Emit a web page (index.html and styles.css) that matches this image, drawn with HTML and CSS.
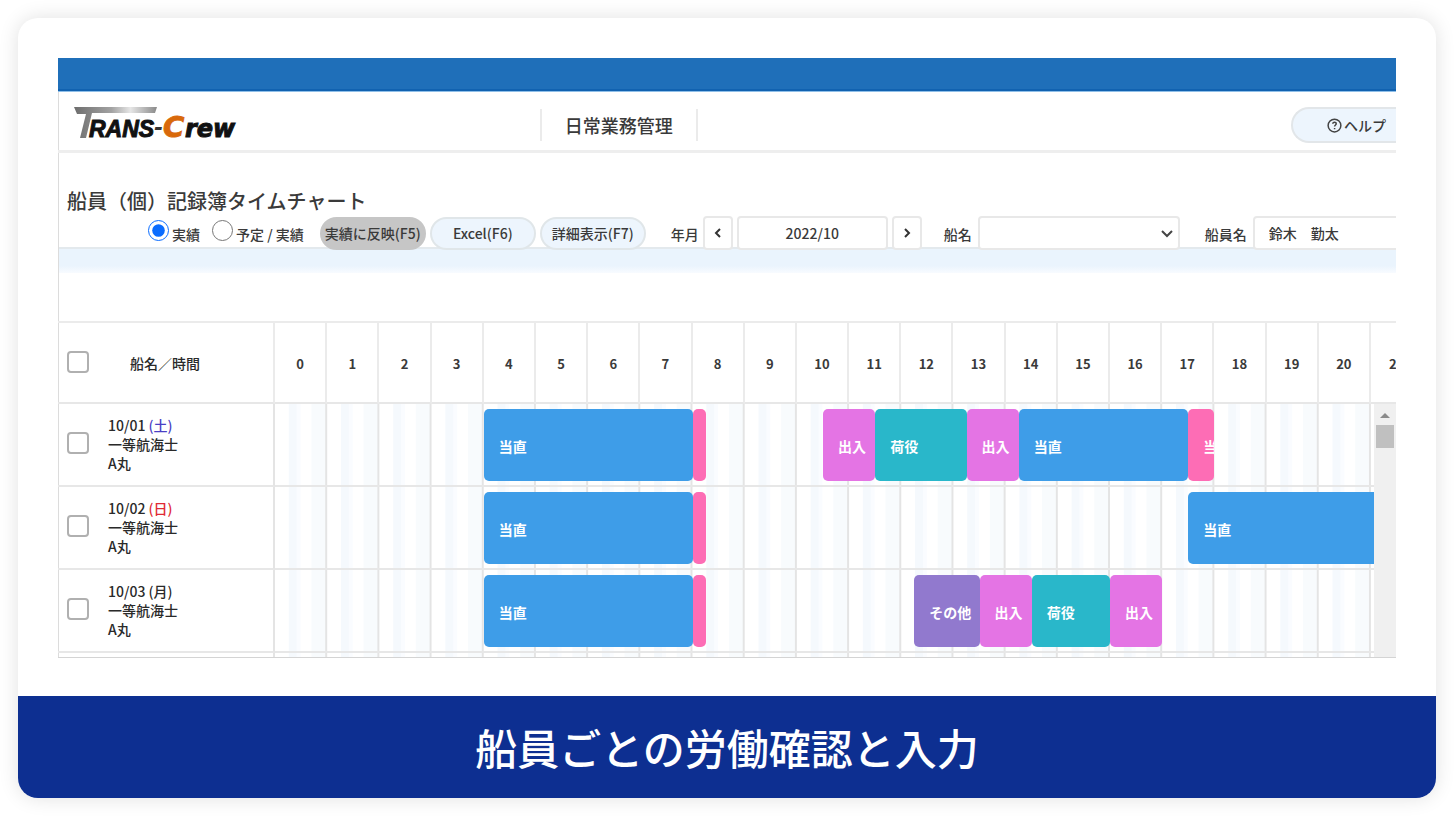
FILE: index.html
```html
<!DOCTYPE html>
<html lang="ja">
<head>
<meta charset="utf-8">
<meta name="viewport" content="width=device-width, initial-scale=1">
<title>船員ごとの労働確認と入力</title>
<link rel="stylesheet" href="styles.css">
</head>
<body>
<figure class="card">
  <div class="screen">
    <div class="topbar"></div>
    <header class="header">
      <svg class="logo" viewBox="0 0 170 36" width="170" height="36" role="img" aria-label="TRANS-Crew">
        <defs>
          <linearGradient id="silver" x1="0" x2="1" y1="0" y2="0">
            <stop offset="0" stop-color="#6d6d6d"/>
            <stop offset="0.45" stop-color="#a2a2a2"/>
            <stop offset="0.68" stop-color="#e6e6e6"/>
            <stop offset="1" stop-color="#8a8a8a"/>
          </linearGradient>
        </defs>
        <path d="M0 0H83L81 6H18L12 31H6L12 7H3Z" fill="url(#silver)"/>
        <text class="logo-rans" x="15" y="30">RANS</text>
        <text class="logo-dash" x="80" y="28">-</text>
        <text class="logo-c" x="89" y="30">C</text>
        <text class="logo-rew" x="111" y="30">rew</text>
      </svg>
      <h1 class="page-name">日常業務管理</h1>
      <button class="help" type="button">
        <svg viewBox="0 0 16 16" width="15" height="15" aria-hidden="true"><circle cx="8" cy="8" r="6.8" fill="none" stroke="#444" stroke-width="1.6"/><path d="M6.2 6.2C6.2 3.8 10 4 9.8 6.3C9.7 7.4 8.2 7.5 8.1 9.1M8.1 10.6V12" fill="none" stroke="#444" stroke-width="1.6"/></svg>ヘルプ
      </button>
    </header>

    <h2 class="title">船員（個）記録簿タイムチャート</h2>
    <form class="toolbar">
      <label class="radio"><input type="radio" name="mode" checked><span>実績</span></label>
      <label class="radio"><input type="radio" name="mode"><span>予定 / 実績</span></label>
      <div class="actions">
        <button class="pill pill-active" type="button">実績に反映(F5)</button>
        <button class="pill" type="button">Excel(F6)</button>
        <button class="pill" type="button">詳細表示(F7)</button>
      </div>
      <div class="field month">
        <label for="month">年月</label>
        <button class="step" type="button" aria-label="前月"><svg viewBox="0 0 10 12" width="10" height="12"><path d="M7 2L3 6L7 10" fill="none" stroke="#333" stroke-width="2"/></svg></button>
        <input class="box month-box" id="month" type="text" value="2022/10">
        <button class="step" type="button" aria-label="翌月"><svg viewBox="0 0 10 12" width="10" height="12"><path d="M3 2L7 6L3 10" fill="none" stroke="#333" stroke-width="2"/></svg></button>
      </div>
      <div class="field ship">
        <label for="ship">船名</label>
        <div class="select-wrap">
          <select class="box ship-box" id="ship"><option></option></select>
          <svg class="caret" viewBox="0 0 12 8" width="12" height="8" aria-hidden="true"><path d="M1 1L6 6L11 1" fill="none" stroke="#444" stroke-width="2"/></svg>
        </div>
      </div>
      <div class="field crew">
        <label for="crew">船員名</label>
        <input class="box crew-box" id="crew" type="text" value="鈴木　勤太">
      </div>
    </form>
    <div class="band"></div>

    <table class="chart">
      <colgroup>
        <col class="col-name"><col span="21"><col class="col-edge"><col class="col-scroll">
      </colgroup>
      <thead>
        <tr>
          <th><label class="pick pick-all"><input type="checkbox"><span>船名／時間</span></label></th>
          <th>0</th><th>1</th><th>2</th><th>3</th><th>4</th><th>5</th><th>6</th>
          <th>7</th><th>8</th><th>9</th><th>10</th><th>11</th><th>12</th><th>13</th>
          <th>14</th><th>15</th><th>16</th><th>17</th><th>18</th><th>19</th><th>20</th>
          <th class="cut" colspan="2">21</th>
        </tr>
      </thead>
      <tbody>
        <tr>
          <td><label class="pick"><input type="checkbox"><span>10/01 <span class="sat">(土)</span><br>一等航海士<br>A丸</span></label></td>
          <td class="lane" colspan="22">
            <div class="track">
              <div class="bar watch" style="grid-column:17/33">当直</div>
              <div class="bar over" style="grid-column:33/34"></div>
              <div class="bar port" style="grid-column:43/47">出入</div>
              <div class="bar cargo" style="grid-column:47/54">荷役</div>
              <div class="bar port" style="grid-column:54/58">出入</div>
              <div class="bar watch" style="grid-column:58/71">当直</div>
              <div class="bar over" style="grid-column:71/73">当直</div>
            </div>
          </td>
          <td class="scroll" rowspan="4">
            <svg viewBox="0 0 22 46" width="22" height="46" aria-hidden="true"><path d="M6 14L11 9L16 14Z" fill="#8b8b8b"/><path d="M2 21H20V44H2Z" fill="#c0c0c0"/></svg>
          </td>
        </tr>
        <tr>
          <td><label class="pick"><input type="checkbox"><span>10/02 <span class="sun">(日)</span><br>一等航海士<br>A丸</span></label></td>
          <td class="lane" colspan="22">
            <div class="track">
              <div class="bar watch" style="grid-column:17/33">当直</div>
              <div class="bar over" style="grid-column:33/34"></div>
              <div class="bar watch bar-cut" style="grid-column:71/86">当直</div>
            </div>
          </td>
        </tr>
        <tr>
          <td><label class="pick"><input type="checkbox"><span>10/03 (月)<br>一等航海士<br>A丸</span></label></td>
          <td class="lane" colspan="22">
            <div class="track">
              <div class="bar watch" style="grid-column:17/33">当直</div>
              <div class="bar over" style="grid-column:33/34"></div>
              <div class="bar other" style="grid-column:50/55">その他</div>
              <div class="bar port" style="grid-column:55/59">出入</div>
              <div class="bar cargo" style="grid-column:59/65">荷役</div>
              <div class="bar port" style="grid-column:65/69">出入</div>
            </div>
          </td>
        </tr>
        <tr class="next"><td></td><td class="lane" colspan="22"></td></tr>
      </tbody>
    </table>
  </div>
  <figcaption class="caption">船員ごとの労働確認と入力</figcaption>
</figure>
</body>
</html>
```
FILE: styles.css
```css
* { box-sizing: border-box; }

body {
  margin: 0;
  padding: 18px;
  background: #fff;
  color: #3a3a3a;
  font: 500 14px/20px "Noto Sans CJK JP", sans-serif;
}

button, input, select { font: inherit; color: inherit; margin: 0; }

.card {
  margin: 0;
  border-radius: 20px;
  overflow: hidden;
  background: #fff;
  box-shadow: 0 0 20px rgba(0, 0, 0, 0.12);
}

.screen {
  margin: 40px 40px 38px;
  overflow: hidden;
  border-bottom: 1px solid #d4d4d4;
  background: linear-gradient(#dcdcdc, #dcdcdc) 0 0 / 1px 100% no-repeat;
}

.topbar {
  height: 33px;
  margin-bottom: 1px;
  background: #1f6fb9;
  border-bottom: 2px solid #1162b0;
  box-shadow: 0 1px 0 #8fbfe8;
}

.header {
  display: grid;
  grid-template-columns: 36% auto 1fr;
  align-items: center;
  padding: 15px 0 7px;
  border-bottom: 3px solid #eee;
}

.logo { margin-left: 16px; overflow: visible; }
.logo text { font-style: italic; font-weight: 700; }
.logo-rans { font-family: "Liberation Sans", sans-serif; font-size: 23px; fill: #111; stroke: #111; stroke-width: 1px; }
.logo-dash { font-family: "Liberation Sans", sans-serif; font-size: 26px; fill: #333; }
.logo-c { font-family: "DejaVu Sans", sans-serif; font-size: 29px; fill: #d9690b; stroke: #d9690b; stroke-width: 1px; }
.logo-rew { font-family: "DejaVu Sans", sans-serif; font-size: 24px; fill: #111; stroke: #111; stroke-width: 1px; }

.page-name {
  margin: 0;
  padding: 0 23px;
  border: solid #ebebeb;
  border-width: 0 2px;
  font-size: 18px;
  font-weight: 500;
  line-height: 32px;
}

.help {
  justify-self: end;
  display: flex;
  align-items: center;
  gap: 2px;
  height: 36px;
  padding: 0 10px 0 34px;
  border: 2px solid #e2e6e9;
  border-right: 0;
  border-radius: 18px 0 0 18px;
  background: #edf5fd;
}

.title {
  margin: 0;
  padding: 33px 0 0 9px;
  font-size: 20px;
  font-weight: 500;
  line-height: 30px;
}

.toolbar {
  position: relative;
  display: flex;
  align-items: center;
  width: max-content;
  min-width: 100%;
  padding-left: 90px;
}

.radio { display: flex; align-items: center; gap: 3px; margin-right: 12px; }
.radio input { width: 21px; height: 21px; margin-bottom: 6px; accent-color: #0a6cff; }
.radio span { padding-top: 2px; }

.actions { display: flex; gap: 4px; margin: 0 25px 0 4px; }
.pill {
  width: 106px;
  height: 33px;
  padding: 0;
  border: 2px solid #e0e6e9;
  border-radius: 17px;
  background: #edf5fd;
  white-space: nowrap;
}
.pill-active { border-color: #c6c6c6; background: #c6c6c6; }

.field { display: flex; align-items: center; }
.field label { padding-top: 2px; }
.month { gap: 4px; }
.ship { gap: 6px; margin-left: 22px; }
.crew { gap: 6px; margin-left: 25px; }

.step, .box {
  height: 34px;
  padding: 0;
  border: 2px solid #e8e8e8;
  border-radius: 4px;
  background: #fff;
}
.step { display: grid; place-items: center; width: 30px; }
.month-box { width: 151px; text-align: center; }
.ship-box { width: 202px; appearance: none; }
.crew-box { width: 160px; padding-left: 14px; border-radius: 4px 0 0 4px; }
.crew { margin-right: -16px; }
.select-wrap { display: flex; position: relative; }
.caret { position: absolute; right: 7px; top: 14px; }

.band {
  height: 26px;
  margin: -3px 0 48px 1px;
  border-top: 2px solid #e3e9ed;
  background: linear-gradient(#eaf4fd 70%, #f8fbff);
}

.chart {
  width: 100%;
  table-layout: fixed;
  border-collapse: separate;
  border-spacing: 0;
  border-top: 2px solid #ebebeb;
}
.col-name { width: 217px; }
.col-edge { width: 3px; }
.col-scroll { width: 22px; }

th, td { padding: 0; border-bottom: 2px solid #e7e7e7; }
th {
  height: 81px;
  padding-top: 2px;
  border-right: 2px solid #ebebeb;
  font-size: 13px;
  font-weight: 700;
}
td:first-child { border-right: 2px solid #e4e4e4; }
th.cut { padding-left: 18px; border-right: 0; text-align: left; overflow: hidden; }

.pick {
  display: flex;
  align-items: center;
  gap: 19px;
  padding-left: 9px;
  color: #2a2a2a;
  line-height: 19px;
}
.pick-all { gap: 41px; font-size: 14px; font-weight: 500; }
.pick input {
  appearance: none;
  width: 22px;
  height: 22px;
  margin-bottom: 3px;
  border: 2px solid #b0b0b0;
  border-radius: 4px;
  background: #fff;
}
.sat { color: #4a3fc4; }
.sun { color: #e02a35; }

.lane {
  background: linear-gradient(90deg, #fff 14px, #f5f9fd 14px 22px, #fafcff 22px 26px, #fff 26px 36px, #f8fbfd 36px 50px, #e4e4e4 50px)
    0 0 / calc((100% - 3px) / 21) 100%;
}
.track {
  display: grid;
  grid-template-columns: repeat(84, minmax(0, 1fr)) 3px;
  padding: 5px 0 4px;
}
.bar {
  grid-row: 1;
  min-width: 0;
  height: 72px;
  border-radius: 5px;
  overflow: hidden;
  color: #fff;
  font-weight: 700;
  line-height: 74px;
  text-indent: 15px;
  white-space: nowrap;
}
.bar-cut { border-radius: 5px 0 0 5px; }
.watch { background: #3e9de8; }
.over { background: #fd6db5; }
.port { background: #e474e4; }
.cargo { background: #29b7ca; }
.other { background: #9179ce; }

.scroll { background: #f0f0f0; vertical-align: top; border-bottom: 0; }
.scroll svg { display: block; }
.next td { height: 4px; border-bottom: 0; }

.caption {
  padding: 20px;
  background: #0d2f91;
  color: #fff;
  font-size: 42px;
  font-weight: 500;
  line-height: 62px;
  text-align: center;
}
```
